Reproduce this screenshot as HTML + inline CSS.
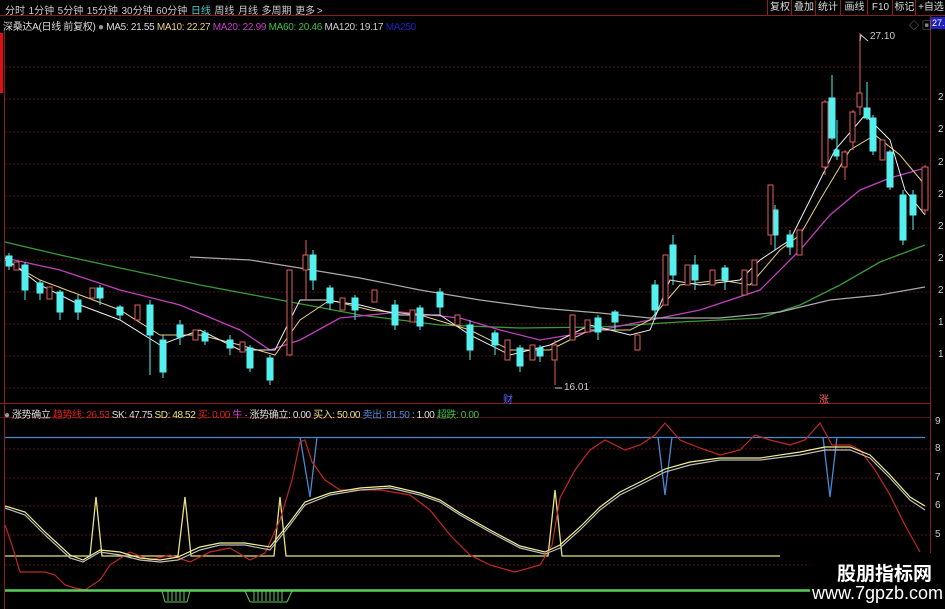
<!DOCTYPE html>
<html><head><meta charset="utf-8"><style>
*{margin:0;padding:0}
body{width:945px;height:609px;background:#000;overflow:hidden;position:relative;font-family:"Liberation Sans","Noto Sans CJK SC",sans-serif;font-size:10px;color:#ccc}
.t{position:absolute;white-space:nowrap}
.btn{position:absolute;top:0;height:15px;line-height:15px;border-left:1px solid #8a1e1e;width:24px;text-align:center;color:#ddd;font-size:10px;overflow:hidden}
</style></head><body>
<svg width="945" height="609" style="position:absolute;left:0;top:0">
<line x1="0" y1="15.5" x2="945" y2="15.5" stroke="#8a1e1e"/>
<line x1="930.5" y1="15" x2="930.5" y2="609" stroke="#8a1e1e"/>
<line x1="0" y1="403.5" x2="930" y2="403.5" stroke="#8a1e1e"/>
<line x1="0" y1="417.5" x2="930" y2="417.5" stroke="#5a1414"/>
<line x1="4.5" y1="30" x2="4.5" y2="609" stroke="#8a1e1e"/>
<rect x="0" y="33" width="3" height="60" fill="#e01010"/>
<g stroke="#5a1414" stroke-dasharray="2,2">
<line x1="5" y1="67" x2="930" y2="67"/><line x1="5" y1="99" x2="930" y2="99"/><line x1="5" y1="132" x2="930" y2="132"/><line x1="5" y1="164" x2="930" y2="164"/><line x1="5" y1="196" x2="930" y2="196"/><line x1="5" y1="228" x2="930" y2="228"/><line x1="5" y1="260" x2="930" y2="260"/><line x1="5" y1="292" x2="930" y2="292"/><line x1="5" y1="324" x2="930" y2="324"/><line x1="5" y1="356" x2="930" y2="356"/><line x1="5" y1="388" x2="930" y2="388"/>
<line x1="5" y1="449" x2="930" y2="449"/><line x1="5" y1="478" x2="930" y2="478"/><line x1="5" y1="506" x2="930" y2="506"/><line x1="5" y1="535" x2="930" y2="535"/><line x1="5" y1="565" x2="930" y2="565"/>
</g>
<polyline fill="none" stroke="#3a9a3a" stroke-width="1.3" points="5,242 60,255 120,268 200,285 280,300 360,315 440,325 520,328 600,327 680,322 760,318 800,305 840,285 880,262 925,245"/>
<polyline fill="none" stroke="#c040c0" stroke-width="1.3" points="5,258 60,270 120,290 180,305 240,330 270,350 300,340 340,318 400,312 460,318 500,330 540,340 600,330 640,322 700,310 760,290 800,250 830,215 860,190 890,178 925,168"/>
<polyline fill="none" stroke="#aaa" stroke-width="1.2" points="190,257 250,260 300,268 360,278 420,290 480,300 540,308 600,313 650,318 720,318 780,312 830,300 880,295 925,287"/>
<polyline fill="none" stroke="#e8d080" stroke-width="1" points="5,260 40,280 80,295 120,310 160,335 200,335 240,345 275,355 300,320 330,300 370,310 420,315 470,330 510,350 550,350 590,330 630,330 650,320 680,285 720,280 750,285 780,250 800,235 820,200 850,150 875,135 900,155 925,185"/>
<polyline fill="none" stroke="#eee" stroke-width="1" points="5,258 40,285 80,305 120,320 160,345 200,330 240,350 275,350 300,300 325,300 360,305 400,315 440,315 470,335 510,355 550,345 590,325 630,335 650,330 670,280 700,285 740,280 760,260 790,240 810,200 835,150 865,115 890,140 905,190 925,215"/>
<g stroke-width="1">
<g fill="#54f0f0" stroke="#54f0f0">
<line x1="9" y1="253" x2="9" y2="270"/><rect x="6" y="256" width="6" height="10"/>
<line x1="25" y1="262" x2="25" y2="300"/><rect x="22" y="265" width="6" height="25"/>
<line x1="40" y1="280" x2="40" y2="300"/><rect x="37" y="283" width="6" height="10"/>
<line x1="60" y1="290" x2="60" y2="320"/><rect x="57" y="292" width="6" height="20"/>
<line x1="78" y1="295" x2="78" y2="320"/><rect x="75" y="300" width="6" height="12"/>
<line x1="100" y1="285" x2="100" y2="305"/><rect x="97" y="288" width="6" height="10"/>
<line x1="120" y1="305" x2="120" y2="320"/><rect x="117" y="307" width="6" height="8"/>
<line x1="150" y1="300" x2="150" y2="375"/><rect x="147" y="305" width="6" height="30"/>
<line x1="163" y1="335" x2="163" y2="378"/><rect x="160" y="340" width="6" height="32"/>
<line x1="180" y1="320" x2="180" y2="345"/><rect x="177" y="325" width="6" height="12"/>
<line x1="205" y1="330" x2="205" y2="345"/><rect x="202" y="333" width="6" height="8"/>
<line x1="230" y1="335" x2="230" y2="355"/><rect x="227" y="340" width="6" height="8"/>
<line x1="250" y1="345" x2="250" y2="372"/><rect x="247" y="348" width="6" height="20"/>
<line x1="270" y1="355" x2="270" y2="385"/><rect x="267" y="358" width="6" height="22"/>
<line x1="313" y1="250" x2="313" y2="290"/><rect x="310" y="255" width="6" height="25"/>
<line x1="330" y1="285" x2="330" y2="310"/><rect x="327" y="288" width="6" height="15"/>
<line x1="355" y1="295" x2="355" y2="320"/><rect x="352" y="298" width="6" height="12"/>
<line x1="395" y1="300" x2="395" y2="330"/><rect x="392" y="305" width="6" height="20"/>
<line x1="420" y1="305" x2="420" y2="330"/><rect x="417" y="308" width="6" height="18"/>
<line x1="440" y1="288" x2="440" y2="315"/><rect x="437" y="292" width="6" height="15"/>
<line x1="470" y1="320" x2="470" y2="360"/><rect x="467" y="325" width="6" height="25"/>
<line x1="495" y1="330" x2="495" y2="355"/><rect x="492" y="333" width="6" height="12"/>
<line x1="520" y1="345" x2="520" y2="372"/><rect x="517" y="348" width="6" height="18"/>
<line x1="540" y1="345" x2="540" y2="362"/><rect x="537" y="348" width="6" height="8"/>
<line x1="598" y1="315" x2="598" y2="340"/><rect x="595" y="318" width="6" height="14"/>
<line x1="615" y1="310" x2="615" y2="330"/><rect x="612" y="312" width="6" height="10"/>
<line x1="655" y1="280" x2="655" y2="320"/><rect x="652" y="285" width="6" height="25"/>
<line x1="673" y1="235" x2="673" y2="285"/><rect x="670" y="245" width="6" height="30"/>
<line x1="695" y1="255" x2="695" y2="290"/><rect x="692" y="265" width="6" height="15"/>
<line x1="725" y1="265" x2="725" y2="290"/><rect x="722" y="268" width="6" height="12"/>
<line x1="775" y1="205" x2="775" y2="250"/><rect x="772" y="210" width="6" height="25"/>
<line x1="790" y1="230" x2="790" y2="255"/><rect x="787" y="235" width="6" height="12"/>
<line x1="832" y1="75" x2="832" y2="140"/><rect x="829" y="98" width="6" height="40"/>
<line x1="837" y1="120" x2="837" y2="160"/><rect x="834" y="150" width="5" height="6"/>
<line x1="867" y1="82" x2="867" y2="120"/><rect x="864" y="108" width="6" height="10"/>
<line x1="873" y1="115" x2="873" y2="155"/><rect x="870" y="118" width="6" height="33"/>
<line x1="890" y1="150" x2="890" y2="190"/><rect x="887" y="152" width="6" height="35"/>
<line x1="903" y1="190" x2="903" y2="245"/><rect x="900" y="195" width="6" height="45"/>
<line x1="913" y1="190" x2="913" y2="230"/><rect x="910" y="195" width="6" height="20"/>
</g>
<g fill="#000" stroke="#e06060">
<rect x="14" y="262" width="5" height="8"/><rect x="47" y="287" width="5" height="12"/><rect x="90" y="288" width="5" height="10"/>
<rect x="135" y="305" width="5" height="15"/><rect x="193" y="330" width="5" height="10"/><rect x="240" y="342" width="5" height="10"/>
<rect x="287" y="270" width="5" height="85"/>
<line x1="306" y1="240" x2="306" y2="300"/><rect x="303" y="255" width="5" height="15"/>
<rect x="340" y="298" width="5" height="12"/><rect x="372" y="290" width="5" height="12"/><rect x="410" y="310" width="5" height="12"/>
<rect x="455" y="315" width="5" height="10"/><rect x="505" y="340" width="5" height="20"/><rect x="530" y="345" width="5" height="15"/>
<line x1="555" y1="340" x2="555" y2="385"/><rect x="552" y="345" width="5" height="15"/>
<rect x="570" y="315" width="5" height="25"/><rect x="585" y="320" width="5" height="12"/><rect x="635" y="335" width="5" height="15"/>
<rect x="663" y="255" width="5" height="50"/><rect x="685" y="265" width="5" height="20"/><rect x="710" y="270" width="5" height="15"/>
<rect x="742" y="270" width="5" height="25"/><rect x="752" y="260" width="5" height="25"/>
<line x1="771" y1="185" x2="771" y2="245"/><rect x="768" y="185" width="5" height="50"/>
<rect x="797" y="230" width="5" height="25"/>
<line x1="825" y1="100" x2="825" y2="175"/><rect x="822" y="102" width="6" height="65"/>
<line x1="845" y1="150" x2="845" y2="180"/><rect x="842" y="152" width="5" height="15"/>
<line x1="853" y1="110" x2="853" y2="150"/><rect x="850" y="112" width="5" height="30"/>
<line x1="860" y1="33" x2="860" y2="115"/><rect x="857" y="93" width="5" height="14"/>
<rect x="880" y="140" width="5" height="20"/>
<line x1="925" y1="165" x2="925" y2="215"/><rect x="922" y="167" width="6" height="43"/>
</g>
</g>
<polyline fill="none" stroke="#ccc" points="868,41 861,35 860,41"/>
<line x1="555" y1="388" x2="562" y2="388" stroke="#ccc"/>
<line x1="5" y1="437.5" x2="925" y2="437.5" stroke="#4a88d0" stroke-width="1.3"/>
<polyline fill="none" stroke="#4a88d0" stroke-width="1.3" points="300,437 310,497 317,437"/>
<polyline fill="none" stroke="#4a88d0" stroke-width="1.3" points="658,437 665,495 672,437"/>
<polyline fill="none" stroke="#4a88d0" stroke-width="1.3" points="823,437 830,497 837,437"/>
<polyline fill="none" stroke="#e8e080" stroke-width="1.3" points="5,556 90,556 96,497 102,556 178,556 185,497 191,556 274,556 280,497 286,556 548,556 555,490 562,556 780,556"/>
<polyline fill="none" stroke="#c02828" stroke-width="1.2" points="5,525 12,545 20,572 30,572 45,572 55,575 65,585 75,588 85,590 100,580 110,565 130,552 150,560 170,555 190,562 210,552 230,548 250,560 265,553 280,520 292,480 300,442 305,440 312,462 325,480 340,490 380,490 410,495 430,510 450,535 470,555 490,565 515,572 540,565 552,545 560,498 575,470 590,450 605,440 625,450 640,445 655,435 665,423 680,440 700,448 720,455 740,450 755,435 770,440 790,445 805,440 820,423 832,445 850,445 860,450 875,470 890,495 905,525 920,552"/>
<polyline fill="none" stroke="#bbb" stroke-width="1.2" points="5,508 25,515 45,535 70,558 83,562 100,552 120,555 140,560 160,562 178,560 200,550 220,545 245,545 270,550 290,525 305,505 330,495 360,490 390,488 420,495 440,502 460,515 490,532 520,548 545,554 560,548 580,530 600,510 620,495 640,485 665,472 690,465 720,460 760,460 800,455 825,450 850,450 870,458 890,478 910,500 925,510"/>
<polyline fill="none" stroke="#f0f090" stroke-width="1.2" points="5,506 25,512 45,532 70,555 83,560 100,550 120,552 140,558 160,560 178,557 200,547 220,543 245,543 270,547 290,522 305,502 330,493 360,488 390,486 420,493 440,500 460,513 490,530 520,546 545,552 560,545 580,527 600,507 620,492 640,482 665,469 690,462 720,458 760,458 800,452 825,447 850,447 870,455 890,475 910,497 925,506"/>
<line x1="5" y1="590.5" x2="925" y2="590.5" stroke="#5ccc5c" stroke-width="2.5"/>
<g stroke="#5ccc5c"><line x1="162" y1="591" x2="165" y2="602"/><line x1="190" y1="591" x2="187" y2="602"/><line x1="165" y1="602" x2="187" y2="602"/>
<line x1="168" y1="591" x2="168" y2="601"/><line x1="172" y1="591" x2="172" y2="601"/><line x1="176" y1="591" x2="176" y2="601"/><line x1="180" y1="591" x2="180" y2="601"/><line x1="184" y1="591" x2="184" y2="601"/>
<line x1="245" y1="591" x2="250" y2="602"/><line x1="292" y1="591" x2="287" y2="602"/><line x1="250" y1="602" x2="287" y2="602"/>
<line x1="254" y1="591" x2="254" y2="601"/><line x1="258" y1="591" x2="258" y2="601"/><line x1="262" y1="591" x2="262" y2="601"/><line x1="266" y1="591" x2="266" y2="601"/><line x1="270" y1="591" x2="270" y2="601"/><line x1="274" y1="591" x2="274" y2="601"/><line x1="278" y1="591" x2="278" y2="601"/><line x1="282" y1="591" x2="282" y2="601"/></g>
<rect x="810" y="553" width="135" height="56" fill="#000"/>
<rect x="931" y="17" width="14" height="12" fill="#2020c0"/>
</svg>
<div class="t" style="left:5px;top:2px;color:#ccc;font-size:10px;word-spacing:-1px">分时 &nbsp;1分钟 &nbsp;5分钟 &nbsp;15分钟 &nbsp;30分钟 &nbsp;60分钟 &nbsp;<span style="color:#4ad0d0">日线</span> &nbsp;周线 &nbsp;月线 &nbsp;多周期 &nbsp;更多 &gt;</div>
<div class="btn" style="left:767px">复权</div><div class="btn" style="left:791px">叠加</div><div class="btn" style="left:815px">统计</div><div class="btn" style="left:840px;width:27px">画线</div><div class="btn" style="left:867px;width:25px">F10</div><div class="btn" style="left:892px;width:23px">标记</div><div class="btn" style="left:915px;width:30px">+自选</div>
<div class="t" style="left:3px;top:18px;color:#ddd;font-size:10px;letter-spacing:-0.3px">深桑达A(日线 前复权) <span style="color:#999">●</span> MA5: 21.55 <span style="color:#e8d080">MA10: 22.27</span> <span style="color:#c040c0">MA20: 22.99</span> <span style="color:#40c040">MA60: 20.46</span> <span style="color:#ccc">MA120: 19.17</span> <span style="color:#2020c0">MA250</span></div>
<div class="t" style="left:909px;top:17px;color:#888">◇ ▣</div>
<div class="t" style="left:932px;top:18px;color:#fff;font-size:9px">27.1</div>
<div class="t" style="left:870px;top:31px;color:#ccc;font-size:10px">27.10</div>
<div class="t" style="left:564px;top:382px;color:#ccc;font-size:10px">16.01</div>
<div class="t" style="left:503px;top:391px;color:#6060ff;font-size:10px">财</div>
<div class="t" style="left:819px;top:391px;color:#ff6060;font-size:10px">涨</div>
<div class="t" style="left:938px;top:92px;color:#ccc">2</div><div class="t" style="left:938px;top:124px;color:#ccc">2</div><div class="t" style="left:938px;top:157px;color:#ccc">2</div><div class="t" style="left:938px;top:189px;color:#ccc">2</div><div class="t" style="left:938px;top:221px;color:#ccc">2</div><div class="t" style="left:938px;top:253px;color:#ccc">2</div><div class="t" style="left:938px;top:285px;color:#ccc">2</div><div class="t" style="left:938px;top:317px;color:#ccc">1</div><div class="t" style="left:938px;top:349px;color:#ccc">1</div>
<div class="t" style="left:935px;top:416px;color:#ccc">9</div><div class="t" style="left:935px;top:443px;color:#ccc">8</div><div class="t" style="left:935px;top:472px;color:#ccc">7</div><div class="t" style="left:935px;top:500px;color:#ccc">6</div><div class="t" style="left:935px;top:529px;color:#ccc">5</div>
<div class="t" style="left:4px;top:406px;color:#ddd;font-size:10px;letter-spacing:-0.4px"><span style="color:#999">●</span> 涨势确立 <span style="color:#e02020">趋势线: 26.53</span> SK: 47.75 <span style="color:#e8e080">SD: 48.52</span> <span style="color:#e02020">买: 0.00</span> <span style="color:#d040d0">牛</span> · 涨势确立: 0.00 <span style="color:#e8e080">买入: 50.00</span> <span style="color:#4a88d0">卖出: 81.50</span> : 1.00 <span style="color:#40c040">超跌: 0.00</span></div>
<div class="t" style="left:837px;top:559px;color:#fff;font-size:19px;font-weight:bold;letter-spacing:0px">股朋指标网</div>
<div class="t" style="left:812px;top:583px;color:#fff;font-size:18px;letter-spacing:0px">www.7gpzb.com</div>
</body></html>
